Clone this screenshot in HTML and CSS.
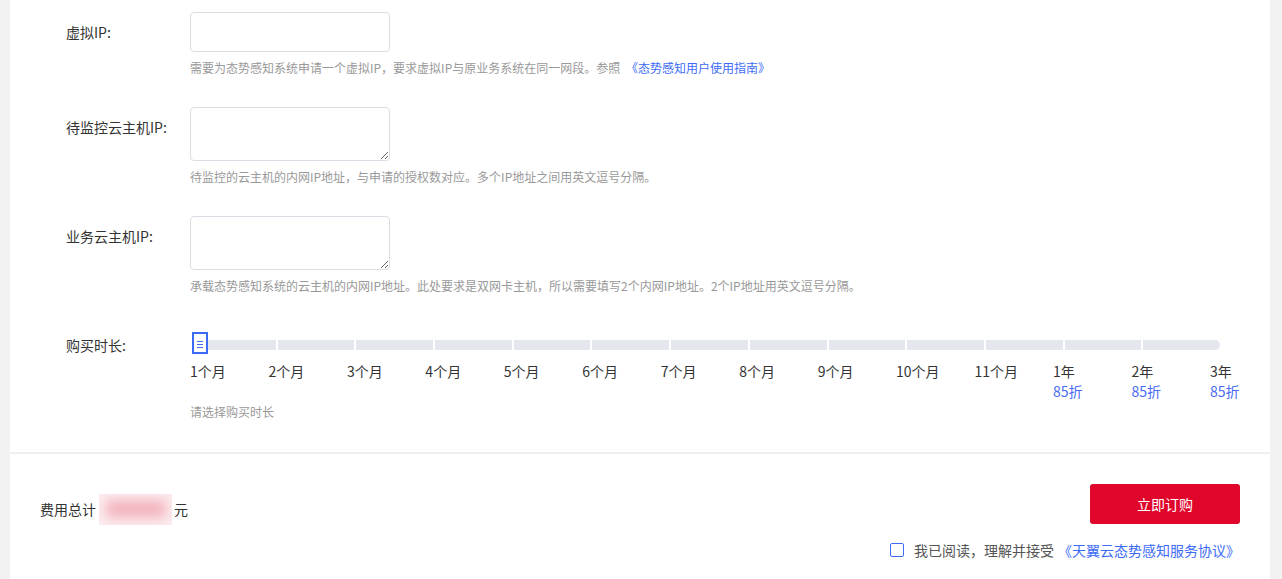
FILE: index.html
```html
<!DOCTYPE html>
<html lang="zh-CN">
<head>
<meta charset="utf-8">
<title>态势感知订购</title>
<link rel="stylesheet" href="styles.css">
</head>
<body>
<div class="page">
  <div class="card">
    <div class="form">
      <div class="row">
        <div class="label">虚拟IP:</div>
        <div class="field">
          <input class="input" type="text">
          <div class="help">需要为态势感知系统申请一个虚拟IP，要求虚拟IP与原业务系统在同一网段。参照 <a class="link">《态势感知用户使用指南》</a></div>
        </div>
      </div>
      <div class="row">
        <div class="label">待监控云主机IP:</div>
        <div class="field">
          <textarea class="textarea"></textarea>
          <div class="help">待监控的云主机的内网IP地址，与申请的授权数对应。多个IP地址之间用英文逗号分隔。</div>
        </div>
      </div>
      <div class="row">
        <div class="label">业务云主机IP:</div>
        <div class="field">
          <textarea class="textarea"></textarea>
          <div class="help">承载态势感知系统的云主机的内网IP地址。此处要求是双网卡主机，所以需要填写2个内网IP地址。2个IP地址用英文逗号分隔。</div>
        </div>
      </div>
      <div class="row row-last">
        <div class="label">购买时长:</div>
        <div class="field">
          <div class="slider">
            <div class="track">
              <span class="seg"></span><span class="seg"></span><span class="seg"></span><span class="seg"></span><span class="seg"></span><span class="seg"></span><span class="seg"></span><span class="seg"></span><span class="seg"></span><span class="seg"></span><span class="seg"></span><span class="seg"></span><span class="seg seg-end"></span>
            </div>
            <div class="handle">
              <svg width="12" height="18" viewBox="0 0 12 18"><path d="M3 7.5h6M3 10.5h6M3 13.5h6" stroke="#3b6cf6" stroke-width="1.2" fill="none"/></svg>
            </div>
          </div>
          <div class="marks">
            <div class="mark">1个月</div>
            <div class="mark">2个月</div>
            <div class="mark">3个月</div>
            <div class="mark">4个月</div>
            <div class="mark">5个月</div>
            <div class="mark">6个月</div>
            <div class="mark">7个月</div>
            <div class="mark">8个月</div>
            <div class="mark">9个月</div>
            <div class="mark">10个月</div>
            <div class="mark">11个月</div>
            <div class="mark">1年<span class="discount">85折</span></div>
            <div class="mark">2年<span class="discount">85折</span></div>
            <div class="mark">3年<span class="discount">85折</span></div>
          </div>
          <div class="hint">请选择购买时长</div>
        </div>
      </div>
    </div>
    <div class="footer">
      <div class="total">费用总计<span class="price"><span class="price-blur"></span></span>元</div>
      <div class="actions">
        <button class="buy">立即订购</button>
        <div class="agree">
          <span class="checkbox"></span>
          <span class="agree-text">我已阅读，理解并接受</span>
          <a class="agree-link">《天翼云态势感知服务协议》</a>
        </div>
      </div>
    </div>
  </div>
</div>
</body>
</html>
```
FILE: styles.css
```css
html, body {
  margin: 0;
  padding: 0;
  background: #f2f2f2;
  font-family: "Noto Sans CJK SC", "Microsoft YaHei", sans-serif;
  color: #333;
  height: 579px;
  overflow: hidden;
}

.page {
  padding: 0 12px 0 10px;
}

.card {
  background: #fff;
  height: 579px;
}

.form {
  padding: 12px 0 32px 56px;
  border-bottom: 2px solid #efefef;
}

.row {
  display: flex;
  margin-bottom: 31px;
}

.row-last {
  margin-bottom: 0;
  margin-top: 1px;
}

.label {
  width: 124px;
  flex: none;
  font-size: 14px;
  line-height: 40px;
  color: #333;
}

.field {
  display: flex;
  flex-direction: column;
}

.input {
  display: block;
  box-sizing: border-box;
  width: 200px;
  height: 40px;
  border: 1px solid #dcdee6;
  border-radius: 4px;
  margin: 0;
  padding: 0 10px;
  outline: none;
}

.textarea {
  display: block;
  box-sizing: border-box;
  width: 200px;
  height: 54px;
  border: 1px solid #dcdee6;
  border-radius: 4px;
  margin: 0;
  padding: 6px 10px;
  outline: none;
  font-family: inherit;
}

.help {
  margin-top: 8px;
  font-size: 12px;
  line-height: 16px;
  color: #999;
  white-space: nowrap;
}

.link {
  color: #3d6bf5;
  text-decoration: none;
  margin-left: 3px;
}

.slider {
  position: relative;
  padding-top: 15px;
  padding-left: 9px;
}

.track {
  display: flex;
  gap: 2px;
  width: 1021px;
  height: 10px;
}

.seg {
  flex: 1;
  background: #e4e7ee;
}

.seg-end {
  border-radius: 0 5px 5px 0;
}

.handle {
  position: absolute;
  left: 2px;
  top: 7px;
  width: 12px;
  height: 18px;
  border: 2px solid #3b6cf6;
  background: #fff;
  display: flex;
}

.handle svg {
  display: block;
}

.marks {
  display: grid;
  grid-template-columns: repeat(14, 78.46px);
  margin-top: 11px;
}

.mark {
  font-size: 14px;
  line-height: 20px;
  color: #333;
  white-space: nowrap;
  display: flex;
  flex-direction: column;
}

.discount {
  color: #4a6cf5;
}

.hint {
  margin-top: 3px;
  font-size: 12px;
  line-height: 16px;
  color: #999;
}

.footer {
  display: flex;
  justify-content: space-between;
  padding: 30px 30px 0 30px;
}

.total {
  display: flex;
  align-items: center;
  height: 40px;
  padding-top: 5px;
  font-size: 14px;
  color: #333;
}

.price {
  display: inline-flex;
  align-items: center;
  justify-content: center;
  width: 73px;
  height: 31px;
  margin: 0 2px 0 3px;
  background: #fcedf0;
  overflow: hidden;
}

.price-blur {
  display: block;
  width: 60px;
  height: 18px;
  background: #f3b4bd;
  filter: blur(6px);
}

.actions {
  display: flex;
  flex-direction: column;
  align-items: flex-end;
}

.buy {
  width: 150px;
  height: 40px;
  border: none;
  border-radius: 3px;
  background: #e0052b;
  color: #fff;
  font-family: inherit;
  font-size: 14px;
  padding: 0;
}

.agree {
  display: flex;
  align-items: center;
  margin-top: 16px;
  height: 20px;
  font-size: 14px;
}

.checkbox {
  box-sizing: border-box;
  width: 14px;
  height: 14px;
  border: 1px solid #3d6bf5;
  border-radius: 2px;
  background: #fff;
  margin-right: 10px;
}

.agree-text {
  color: #555;
}

.agree-link {
  color: #3d6bf5;
  margin-left: 4px;
}
```
